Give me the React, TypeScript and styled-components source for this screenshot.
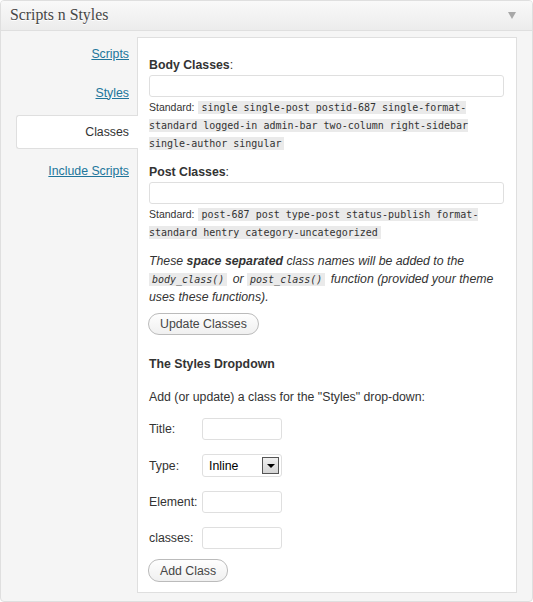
import React from "react";
import styled, { createGlobalStyle } from "styled-components";

const Global = createGlobalStyle`
  html, body { margin: 0; padding: 0; background: #fff; }
  body { font-family: "Liberation Sans", Arial, sans-serif; font-size: 12.3px; color: #333; }
  * { box-sizing: border-box; }
`;

const Box = styled.div`
  width: 533px;
  height: 602px;
  border: 1px solid #dfdfdf;
  border-radius: 4px;
  background: #f5f5f5;
  display: flex;
  flex-direction: column;
  overflow: hidden;
`;

const Header = styled.div`
  height: 30px;
  flex: none;
  display: flex;
  align-items: center;
  justify-content: space-between;
  padding: 0 16px 1px 9px;
  background: linear-gradient(to bottom, #f9f9f9, #ececec);
  border-bottom: 1px solid #dfdfdf;
`;

const Title = styled.h3`
  margin: 0;
  font-family: "Liberation Serif", Georgia, serif;
  font-weight: normal;
  font-size: 15.8px;
  color: #464646;
  text-shadow: 0 1px 0 #fff;
`;

const Arrow = styled.span`
  width: 0;
  height: 0;
  border-left: 4px solid transparent;
  border-right: 4px solid transparent;
  border-top: 7px solid #a8a8a8;
  margin-top: 1px;
`;

const Body = styled.div`
  flex: 1;
  display: flex;
  padding: 6px 15px 8px 0;
`;

const TabList = styled.ul`
  list-style: none;
  margin: 0;
  padding: 0;
  width: 136px;
  flex: none;
  display: flex;
  flex-direction: column;
  gap: 5px;
  position: relative;
  z-index: 1;
`;

const Tab = styled.li<{ $active?: boolean }>`
  height: 34px;
  display: flex;
  align-items: center;
  justify-content: flex-end;
  margin-left: 15px;
  margin-right: ${(p) => (p.$active ? "-1px" : "0")};
  padding-right: ${(p) => (p.$active ? "9px" : "8px")};
  padding-bottom: 1px;
  background: ${(p) => (p.$active ? "#fff" : "transparent")};
  border: 1px solid ${(p) => (p.$active ? "#dfdfdf" : "transparent")};
  border-right: none;
  border-radius: 3px 0 0 3px;
`;

const TabLink = styled.a<{ $active?: boolean }>`
  color: ${(p) => (p.$active ? "#333" : "#21759b")};
  text-decoration: ${(p) => (p.$active ? "none" : "underline")};
  font-size: 12.3px;
`;

const Panel = styled.div`
  flex: 1;
  background: #fff;
  border: 1px solid #dfdfdf;
  padding: 18px 12px 8px 11px;
  line-height: 18px;
`;

const FieldLabel = styled.div<{ $mt?: number }>`
  margin-top: ${(p) => p.$mt ?? 0}px;
  margin-bottom: 1px;
  line-height: 18px;
  b { font-weight: bold; }
`;

const TextInput = styled.div`
  height: 22px;
  width: 355px;
  border: 1px solid #dfdfdf;
  border-radius: 3px;
  background: #fff;
  margin-bottom: 1px;
`;

const Desc = styled.div`
  line-height: 18px;
`;

const Small = styled.span`
  font-size: 10.5px;
  line-height: 12px;
  color: #333;
`;

const Code = styled.code`
  font-family: "DejaVu Sans Mono", "Liberation Mono", monospace;
  font-size: 10px;
  line-height: 12px;
  background: #eaeaea;
  padding: 1px 3px;
  margin: 0 1px;
  color: #333;
`;

const Note = styled.p`
  margin: 11px 0 0;
  font-style: italic;
  line-height: 18px;
  b { font-weight: bold; }
  code { font-style: italic; margin: 0 2px 0 0; }
`;

const Button = styled.button<{ $mt: number; $h?: number }>`
  display: block;
  margin-top: ${(p) => p.$mt}px;
  height: ${(p) => p.$h ?? 22}px;
  padding: 0 11px;
  font-family: "Liberation Sans", Arial, sans-serif;
  font-size: 12.3px;
  color: #464646;
  background: linear-gradient(to bottom, #fefefe, #f0f0f0);
  border: 1px solid #bbb;
  border-radius: 11px;
  margin-left: -1px;
`;

const SectionTitle = styled.h4`
  margin: 20px 0 0;
  font-size: 12.3px;
  font-weight: bold;
  line-height: 18px;
`;

const Para = styled.p`
  margin: 15px 0 0;
  line-height: 18px;
`;

const Form = styled.div`
  margin-top: 12px;
  display: grid;
  grid-template-columns: 53px 80px;
  row-gap: 14px;
  align-items: center;
`;

const RowLabel = styled.label`
  font-size: 12.3px;
`;

const SmallInput = styled.div`
  height: 22px;
  width: 80px;
  border: 1px solid #dfdfdf;
  border-radius: 3px;
  background: #fff;
`;

const Select = styled.div`
  height: 23px;
  width: 80px;
  border: 1px solid #dfdfdf;
  border-radius: 3px;
  background: #fff;
  display: flex;
  align-items: center;
  justify-content: space-between;
  padding: 0 2px 0 6px;
  color: #000;
`;

const SelectBtn = styled.span`
  width: 17px;
  height: 17px;
  border: 1px solid #555;
  background: linear-gradient(to bottom, #f0f0f0, #d4d4d4);
  display: flex;
  align-items: center;
  justify-content: center;
  &::after {
    content: "";
    border-left: 4px solid transparent;
    border-right: 4px solid transparent;
    border-top: 4px solid #000;
  }
`;

const tabs = ["Scripts", "Styles", "Classes", "Include Scripts"];

export default function App() {
  return (
    <>
      <Global />
      <Box>
        <Header>
          <Title>Scripts n Styles</Title>
          <Arrow />
        </Header>
        <Body>
          <TabList>
            {tabs.map((t) => (
              <Tab key={t} $active={t === "Classes"}>
                <TabLink $active={t === "Classes"}>{t}</TabLink>
              </Tab>
            ))}
          </TabList>
          <Panel>
            <FieldLabel>
              <b>Body Classes</b>:
            </FieldLabel>
            <TextInput />
            <Desc>
              <Small>Standard: </Small>
              <Code>single single-post postid-687 single-format-standard logged-in admin-bar two-column right-sidebar single-author singular</Code>
            </Desc>
            <FieldLabel $mt={11}>
              <b>Post Classes</b>:
            </FieldLabel>
            <TextInput />
            <Desc>
              <Small>Standard: </Small>
              <Code>post-687 post type-post status-publish format-standard hentry category-uncategorized</Code>
            </Desc>
            <Note>
              These <b>space separated</b> class names will be added to the <Code>body_class()</Code> or{" "}
              <Code>post_class()</Code> function (provided your theme uses these functions).
            </Note>
            <Button $mt={7}>Update Classes</Button>
            <SectionTitle>The Styles Dropdown</SectionTitle>
            <Para>Add (or update) a class for the "Styles" drop-down:</Para>
            <Form>
              <RowLabel>Title:</RowLabel>
              <SmallInput />
              <RowLabel>Type:</RowLabel>
              <Select>
                <span>Inline</span>
                <SelectBtn />
              </Select>
              <RowLabel>Element:</RowLabel>
              <SmallInput />
              <RowLabel>classes:</RowLabel>
              <SmallInput />
            </Form>
            <Button $mt={10} $h={23}>Add Class</Button>
          </Panel>
        </Body>
      </Box>
    </>
  );
}
